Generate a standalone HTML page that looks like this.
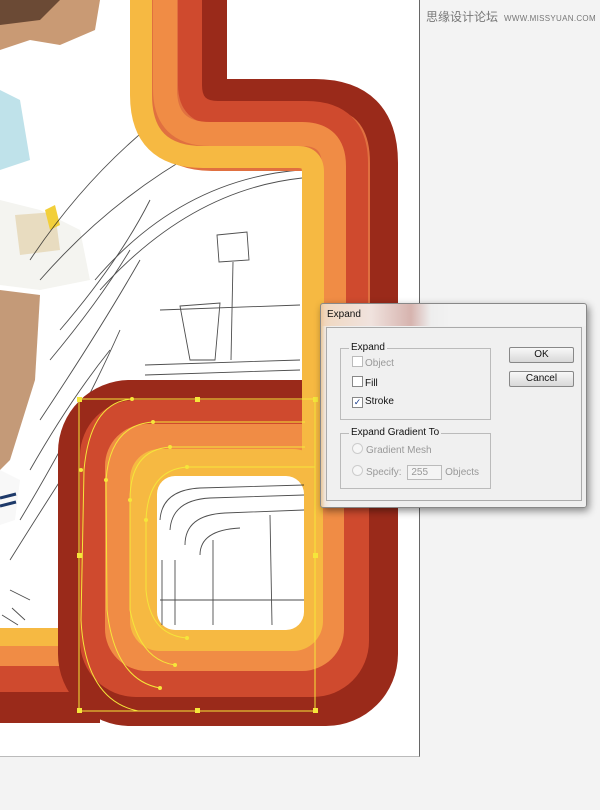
<!DOCTYPE html>
<html><head><meta charset="utf-8"><style>
body{margin:0;width:600px;height:810px;background:#f3f3f3;position:relative;overflow:hidden;font-family:"Liberation Sans",sans-serif}
#canvas{position:absolute;left:0;top:0;width:419px;height:756px;background:#fff;border-right:1px solid #666;border-bottom:1px solid #bbb}
svg{position:absolute;left:0;top:0}
.wm{position:absolute;left:426px;top:8px;font-size:12px;color:#777;font-family:"Liberation Sans","Noto Sans CJK SC",sans-serif;white-space:nowrap}
.wm span{font-size:8px;letter-spacing:.3px;margin-left:6px}
#dlg{position:absolute;left:320px;top:303px;width:265px;height:203px;background:linear-gradient(90deg,#e8c79a 0,#f0e6dc 4px,#efefef 10px);border:1px solid #888;border-radius:3px;box-shadow:2px 3px 8px rgba(0,0,0,.45);font-size:10px;color:#111}
#tbar{position:absolute;left:0;top:0;right:0;height:22px;background:linear-gradient(90deg,rgba(240,200,160,.6),rgba(240,225,220,.9) 50px,rgba(190,120,110,.5) 90px,#eee 110px,#f2f2f2 130px);border-radius:3px 3px 0 0}
#tbar b{position:absolute;left:6px;top:5px;font-weight:normal;font-size:10px}
#panel{position:absolute;left:5px;top:23px;width:254px;height:172px;border:1px solid #aaa;background:#f0f0f0}
.grp{position:absolute;border:1px solid #bbb}
.lg{position:absolute;top:-7px;left:8px;background:#f0f0f0;padding:0 2px}
.it{position:absolute;left:11px;white-space:nowrap}
.cb{display:inline-block;width:9px;height:9px;border:1px solid #888;background:#fff;vertical-align:-1px;margin-right:2px;font-size:9px;line-height:9px;text-align:center;color:#1a3c8a}
.rd{display:inline-block;width:9px;height:9px;border:1px solid #ccc;border-radius:50%;background:#f6f6f6;vertical-align:-1px;margin-right:3px}
.dis{color:#999}
.btn{position:absolute;left:182px;width:63px;height:14px;border:1px solid #888;border-radius:2px;background:linear-gradient(#f8f8f8,#d8d8d8);text-align:center;line-height:13px;font-size:10px}
</style></head><body>
<div id="canvas"></div>
<svg width="600" height="810" viewBox="0 0 600 810">
<!-- girl colors -->
<path d="M0,0 H100 L95,30 L60,45 L30,40 L0,50Z" fill="#c99a74"/>
<path d="M0,0 H60 L40,20 L0,25Z" fill="#6b4a35"/>
<path d="M0,90 L20,100 L30,160 L0,170Z" fill="#bfe2ea"/>
<path d="M0,200 L40,210 L80,230 L90,280 L40,290 L0,285Z" fill="#f4f4f0"/>
<path d="M15,215 L55,212 L60,250 L20,255Z" fill="#e8dcc0"/>
<path d="M45,210 L55,205 L60,225 L50,230Z" fill="#f2cf3a"/>
<path d="M0,290 L40,295 L35,380 L10,460 L0,470Z" fill="#c49a78"/>
<path d="M0,470 L20,480 L15,520 L0,525Z" fill="#f8f8f8"/>
<path d="M0,498 L16,494 M0,506 L16,502" stroke="#1e3a6a" stroke-width="3"/>
<!-- sketch lines outside -->
<g fill="none" stroke="#222" stroke-width="0.9" opacity="0.8">
<path d="M95,280 Q180,180 300,170"/><path d="M100,290 Q190,190 302,178"/>
<path d="M30,260 Q90,170 170,110"/><path d="M40,280 Q110,200 200,150"/>
<path d="M60,330 Q120,260 150,200"/><path d="M40,420 Q100,330 140,260"/>
<path d="M20,520 Q80,420 120,330"/><path d="M10,560 Q60,480 100,420"/>
<path d="M50,360 Q100,300 130,250 M30,470 Q70,400 110,350"/>
<path d="M217,235 L247,232 L249,260 L219,262Z"/><path d="M233,262 L231,360"/>
<path d="M180,306 L220,303 L215,360 L190,360Z"/>
<path d="M145,365 L300,360 M145,375 L300,370"/><path d="M160,310 L300,305"/>
<path d="M10,590 L30,600 M12,608 L25,620 M2,615 L18,625"/>
</g>
<!-- bottom-left horizontal band -->
<rect x="0" y="628" width="100" height="20" fill="#f6b942"/>
<rect x="0" y="646" width="100" height="21" fill="#f08c45"/>
<rect x="0" y="666" width="100" height="27" fill="#cf4a2e"/>
<rect x="0" y="692" width="100" height="31" fill="#9a2a1a"/>
<!-- loop as nested fills -->
<rect x="58" y="380" width="340" height="346" rx="72" fill="#9a2a1a"/>
<rect x="80" y="400" width="289" height="297" rx="56" fill="#cf4a2e"/>
<rect x="105" y="424" width="239" height="247" rx="42" fill="#f08c45"/>
<rect x="130" y="449" width="193" height="202" rx="30" fill="#f6b942"/>
<rect x="157" y="476" width="147" height="154" rx="18" fill="#fff"/>
<g fill="none" stroke="#222" stroke-width="0.9" opacity="0.8">
<path d="M160,520 Q162,490 200,488 L304,485"/><path d="M170,530 Q172,500 210,498 L304,495"/>
<path d="M185,545 Q185,515 225,513 L304,510 M200,555 Q200,530 240,528"/>
<path d="M213,540 L213,625 M270,515 L272,625 M160,600 L304,600"/>
<path d="M162,560 L162,625 M175,560 L175,625"/>
</g>
<!-- upper band -->
<g fill="none" stroke-linejoin="round">
<path d="M177,0 V90 Q177,125 212,125 H310 Q350,125 350,165 V480" stroke="#e07040" stroke-width="92"/>
<path d="M213,0 V83 Q213,93 223,93 H314 Q384,93 384,163 V480" stroke="#9a2a1a" stroke-width="28"/>
<path d="M190,0 V85 Q190,113 218,113 H306 Q356,113 356,163 V480" stroke="#cf4a2e" stroke-width="24"/>
<path d="M165,0 V89 Q165,134 210,134 H302 Q334,134 334,166 V480" stroke="#f08c45" stroke-width="24"/>
<path d="M141,0 V95 Q141,157 203,157 H298 Q313,157 313,172 V480" stroke="#f6b942" stroke-width="22"/>
</g>
<!-- selection -->
<g stroke="#f5e63a" fill="none" stroke-width="1">
<rect x="79" y="399" width="236" height="312"/>
<path d="M132,399 Q90,402 84,470 L81,620 Q85,700 138,711"/>
<path d="M153,422 Q110,425 106,480 L107,610 Q115,680 160,688"/>
<path d="M170,447 Q130,450 130,500 L130,610 Q140,660 175,665"/>
<path d="M187,467 Q148,470 146,520 L146,590 Q150,635 187,638"/>
<path d="M132,399 H315 M153,422 H305 M170,447 H305 M187,467 H315"/>
</g>
<g fill="#f5e63a">
<rect x="77" y="397" width="5" height="5"/><rect x="195" y="397" width="5" height="5"/><rect x="313" y="397" width="5" height="5"/>
<rect x="77" y="553" width="5" height="5"/><rect x="313" y="553" width="5" height="5"/>
<rect x="77" y="708" width="5" height="5"/><rect x="195" y="708" width="5" height="5"/><rect x="313" y="708" width="5" height="5"/>
<circle cx="132" cy="399" r="2"/><circle cx="153" cy="422" r="2"/><circle cx="170" cy="447" r="2"/><circle cx="187" cy="467" r="2"/>
<circle cx="81" cy="470" r="2"/><circle cx="106" cy="480" r="2"/><circle cx="130" cy="500" r="2"/><circle cx="146" cy="520" r="2"/>
<circle cx="160" cy="688" r="2"/><circle cx="175" cy="665" r="2"/><circle cx="187" cy="638" r="2"/>
</g>
</svg>
<div class="wm">思缘设计论坛<span>WWW.MISSYUAN.COM</span></div>
<div id="dlg">
<div id="tbar"><b>Expand</b></div>
<div id="panel">
 <div class="grp" style="left:13px;top:20px;width:149px;height:70px">
  <div class="lg">Expand</div>
  <div class="it dis" style="top:7px"><span class="cb" style="border-color:#bbb"></span>Object</div>
  <div class="it" style="top:27px"><span class="cb"></span>Fill</div>
  <div class="it" style="top:47px"><span class="cb">✓</span>Stroke</div>
 </div>
 <div class="grp" style="left:13px;top:105px;width:149px;height:54px">
  <div class="lg">Expand Gradient To</div>
  <div class="it dis" style="top:9px"><span class="rd"></span>Gradient Mesh</div>
  <div class="it dis" style="top:31px"><span class="rd"></span>Specify: <span style="display:inline-block;width:30px;height:13px;border:1px solid #bbb;background:#f4f4f4;margin-left:3px;padding-left:3px;line-height:13px">255</span> Objects</div>
 </div>
 <div class="btn" style="top:19px">OK</div>
 <div class="btn" style="top:43px">Cancel</div>
</div>
</div>
</body></html>
